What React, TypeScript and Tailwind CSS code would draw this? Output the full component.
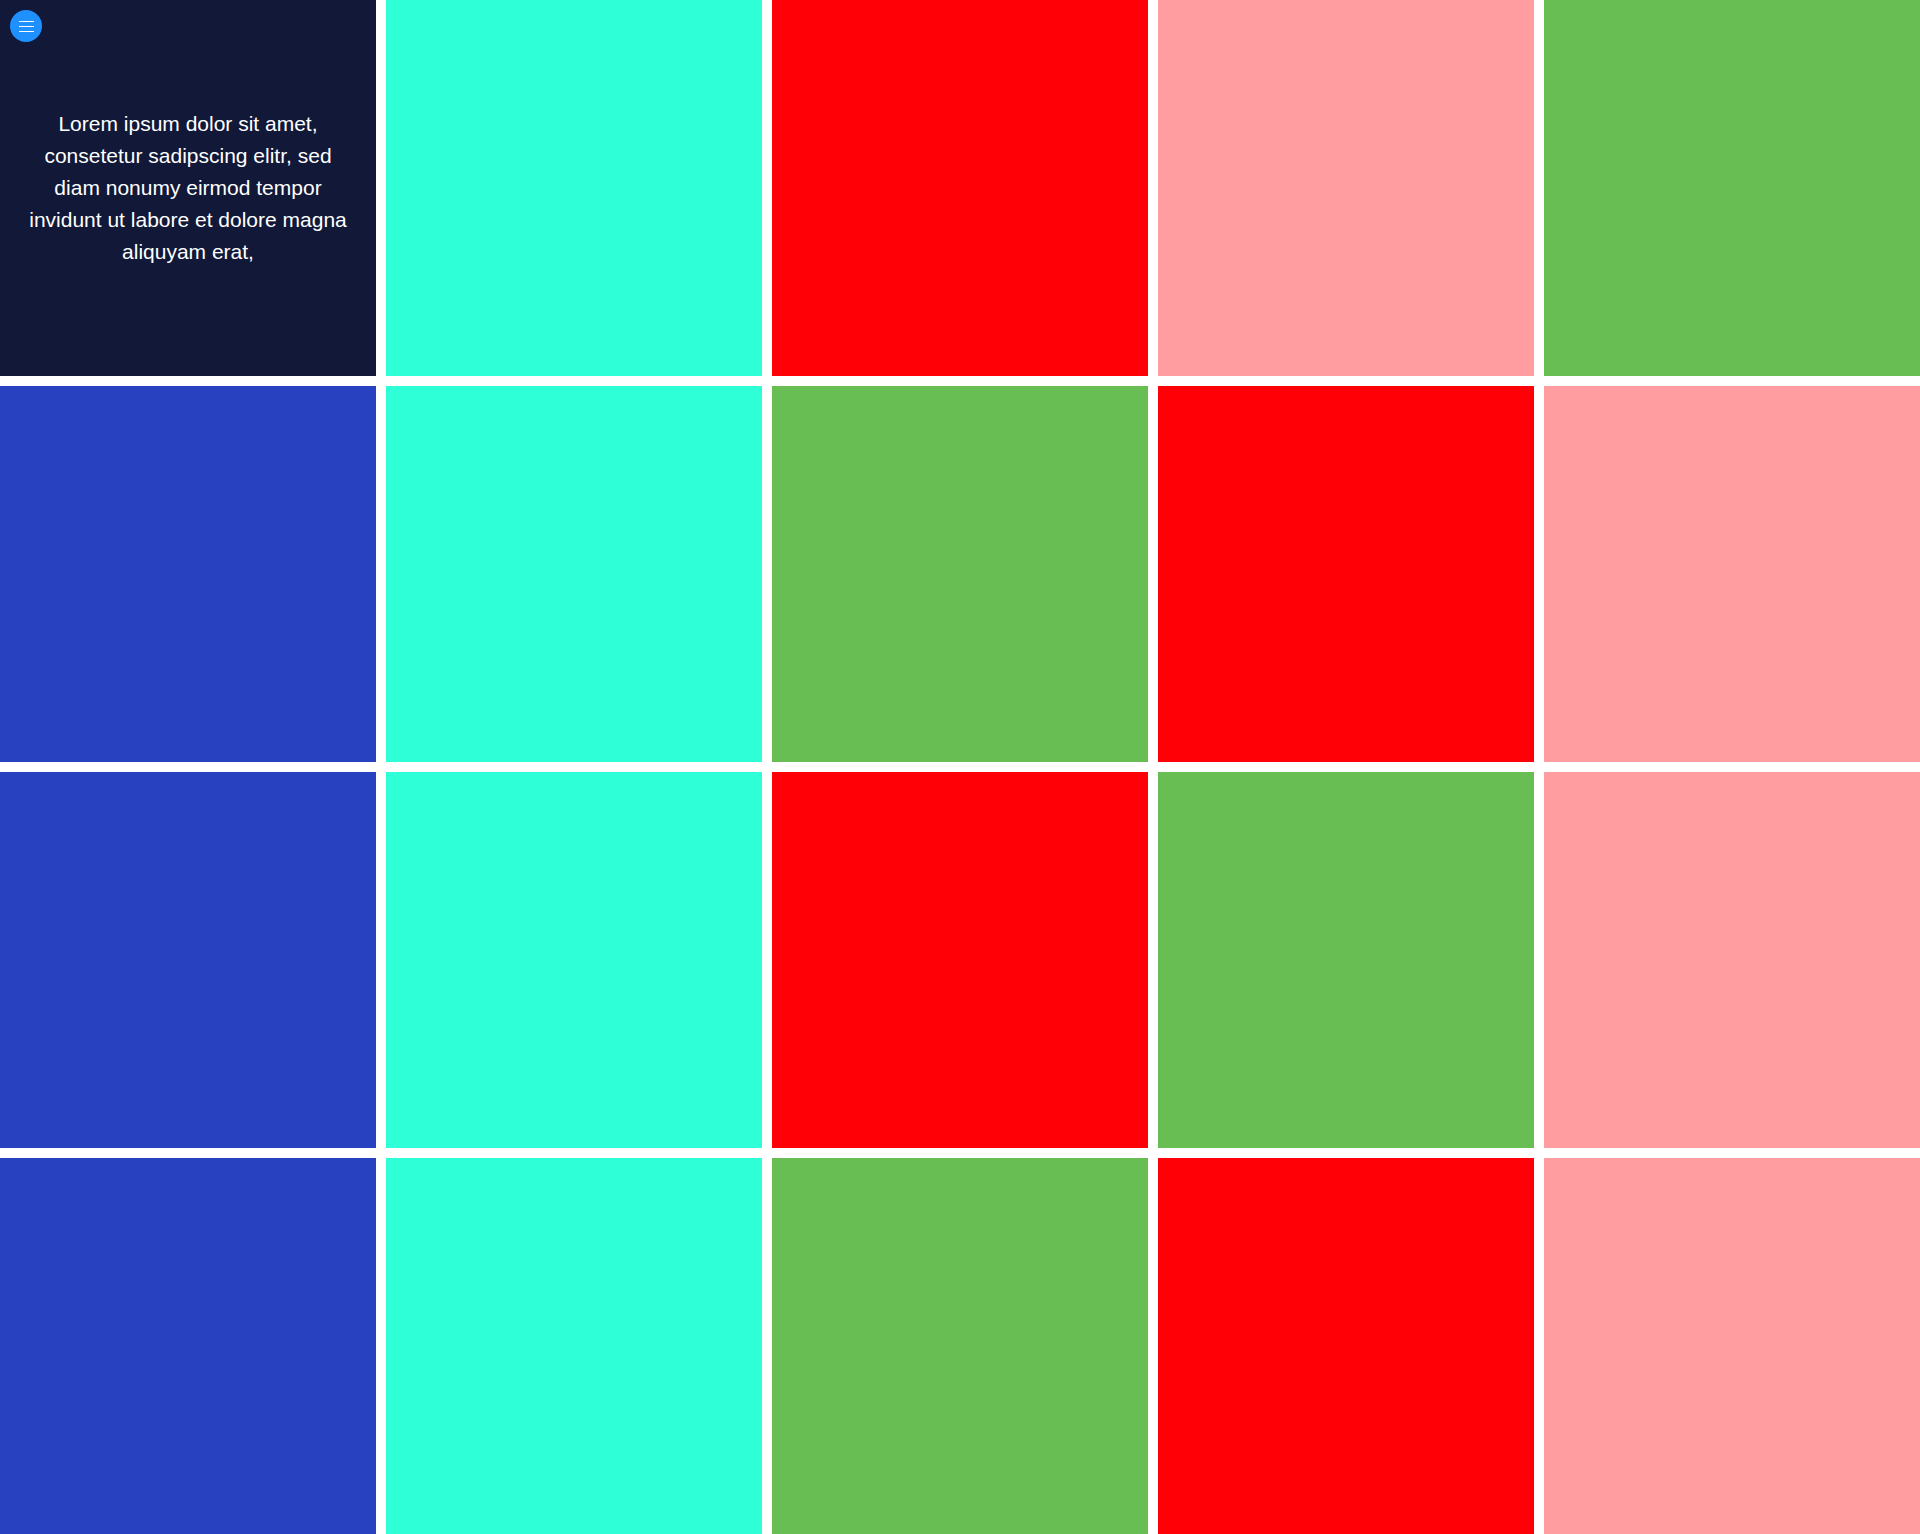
import React from "react";

const colors: Record<string, string> = {
    teal: "bg-[#2effd6]",
    red: "bg-[#ff0006]",
    pink: "bg-[#ff9da0]",
    green: "bg-[#69be53]",
    blue: "bg-[#2841c1]",
};

const rows = [
    ["intro", "teal", "red", "pink", "green"],
    ["blue", "teal", "green", "red", "pink"],
    ["blue", "teal", "red", "green", "pink"],
    ["blue", "teal", "green", "red", "pink"],
];

export default function App() {
    return (
        <div className="relative w-full bg-white font-['Liberation_Sans',Arial,sans-serif]">
            <button
                type="button"
                className="absolute left-[10px] top-[10px] flex h-8 w-8 flex-col items-center justify-center gap-[4px] rounded-full bg-[#1e90ff]"
            >
                <span className="block h-px w-[15px] bg-white" />
                <span className="block h-px w-[15px] bg-white" />
                <span className="block h-px w-[15px] bg-white" />
            </button>
            <div className="grid grid-cols-5 gap-[10px]">
                {rows.flat().map((c, i) =>
                    c === "intro" ? (
                        <div
                            key={i}
                            className="flex h-[376px] items-center justify-center bg-[#111838] px-6"
                        >
                            <p className="text-center text-[21px] leading-[32px] text-white">
                                Lorem ipsum dolor sit amet, consetetur sadipscing elitr, sed diam
                                nonumy eirmod tempor invidunt ut labore et dolore magna aliquyam
                                erat,
                            </p>
                        </div>
                    ) : (
                        <div key={i} className={`h-[376px] ${colors[c]}`} />
                    )
                )}
            </div>
        </div>
    );
}
